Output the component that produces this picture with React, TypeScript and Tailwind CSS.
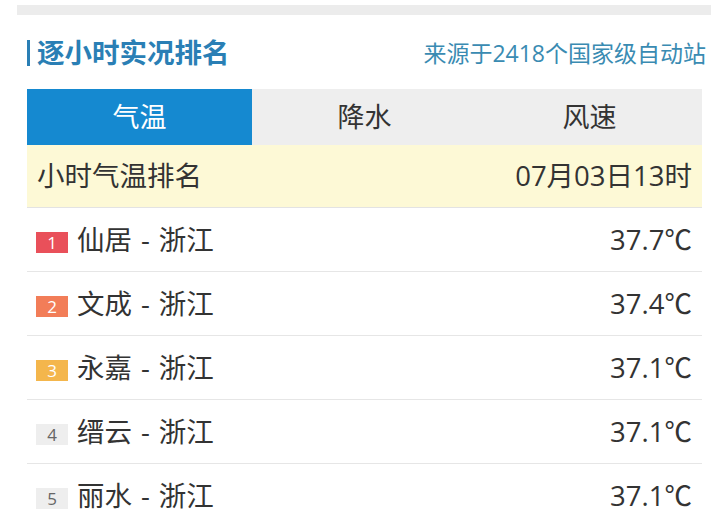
import React from 'react';

const rows = [
  { rank: 1, city: '仙居', prov: '浙江', value: '37.7℃', badge: 'bg-[#e9505a] text-white' },
  { rank: 2, city: '文成', prov: '浙江', value: '37.4℃', badge: 'bg-[#f27d58] text-white' },
  { rank: 3, city: '永嘉', prov: '浙江', value: '37.1℃', badge: 'bg-[#f4b64c] text-white' },
  { rank: 4, city: '缙云', prov: '浙江', value: '37.1℃', badge: 'bg-[#eeeeee] text-[#666]' },
  { rank: 5, city: '丽水', prov: '浙江', value: '37.1℃', badge: 'bg-[#eeeeee] text-[#666]' },
];

const tabs = ['气温', '降水', '风速'];

export default function App() {
  return (
    <div
      className="w-[720px] h-[526px] overflow-hidden bg-white text-[#333]"
      style={{ fontFamily: '"Open Sans", "Noto Sans CJK SC", sans-serif' }}
    >
      {/* top strip */}
      <div className="ml-[17px] mt-[5px] w-[694px] h-[10px] bg-[#ececec]" />

      <div className="ml-[27px] w-[675px]">
        {/* title */}
        <div className="flex items-center justify-between h-[74px] pt-[2px]">
          <div className="flex items-center">
            <div className="w-[3px] h-[26px] bg-[#2a7fb5]" />
            <h1 className="ml-[7px] text-[27.5px] font-bold text-[#2a7fb5] leading-none">逐小时实况排名</h1>
          </div>
          <span className="text-[23px] text-[#3a8bb2] leading-none -mr-[4px]">来源于2418个国家级自动站</span>
        </div>

        {/* tabs */}
        <div className="grid grid-cols-3 h-[56px] bg-[#eeeeee]">
          {tabs.map((t, i) => (
            <div
              key={t}
              className={
                i === 0
                  ? 'flex items-center justify-center bg-[#1589d0] text-white text-[27px]'
                  : 'flex items-center justify-center text-[#333] text-[27px]'
              }
            >
              {t}
            </div>
          ))}
        </div>

        {/* header */}
        <div className="flex items-center justify-between h-[63px] bg-[#fdf9d6] border-b border-[#e3e3e3] px-[10px] text-[27.5px]">
          <span>小时气温排名</span>
          <span>07月03日13时</span>
        </div>

        {rows.map((r) => (
          <div
            key={r.rank}
            className="flex items-center justify-between h-[64px] border-b border-[#e6e6e6] pl-[9px] pr-[10px] text-[27.5px]"
          >
            <div className="flex items-center">
              <span className={`w-[32px] h-[21px] mt-[6px] flex items-center justify-center text-[17px] leading-none ${r.badge}`}>
                {r.rank}
              </span>
              <span className="ml-[9px]">
                {r.city}
                <span className="mx-[9px]">-</span>
                {r.prov}
              </span>
            </div>
            <span>{r.value}</span>
          </div>
        ))}
      </div>
    </div>
  );
}
